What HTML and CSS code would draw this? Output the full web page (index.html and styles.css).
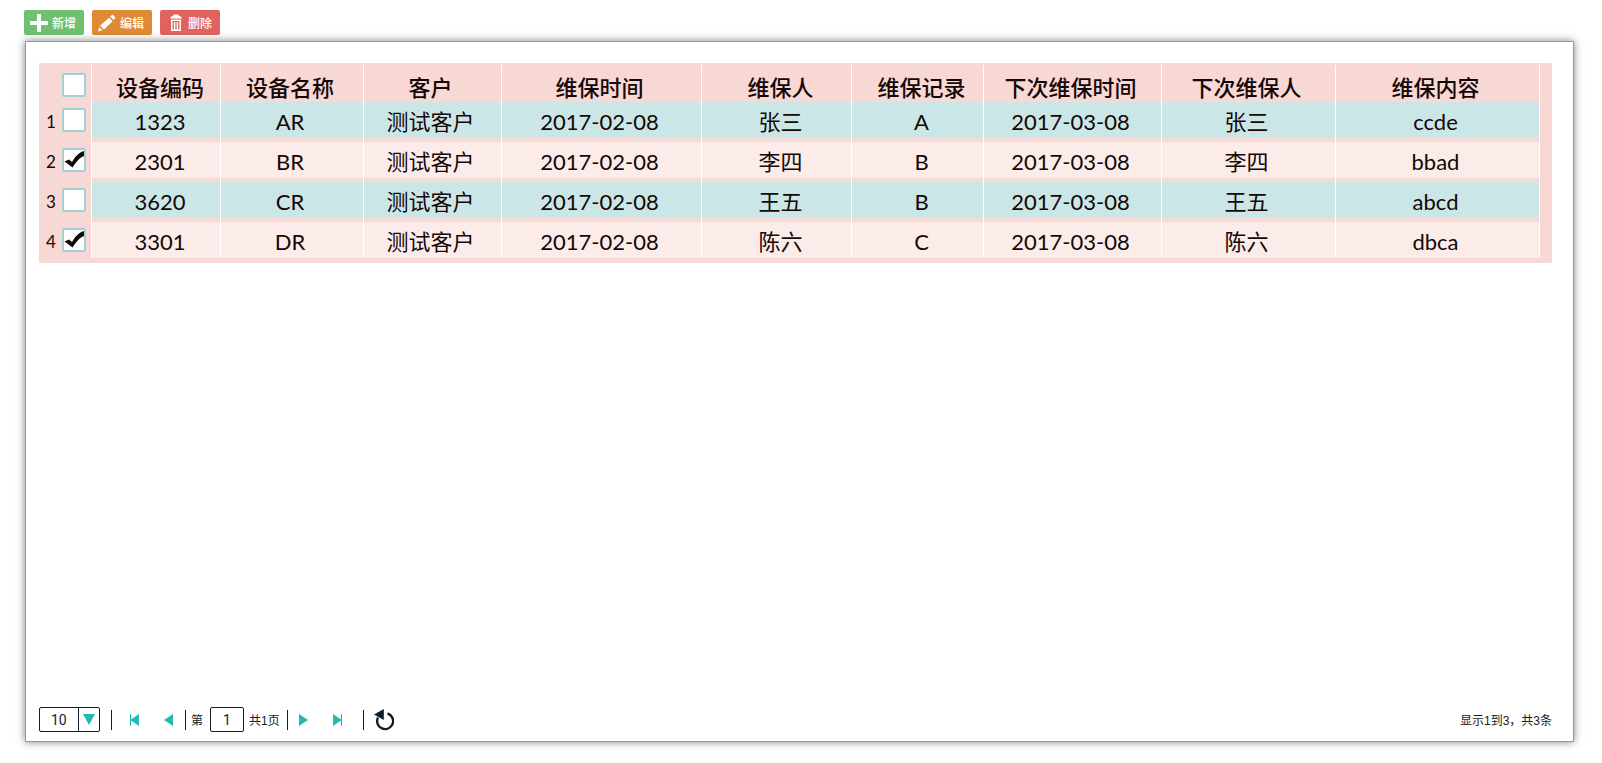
FILE: index.html
```html
<!DOCTYPE html>
<html lang="zh-CN">
<head>
<meta charset="utf-8">
<meta name="viewport" content="width=device-width, initial-scale=1">
<title>设备维保</title>
<link rel="stylesheet" href="styles.css">
</head>
<body>
<div class="page">
  <div class="toolbar">
    <button type="button" class="btn btn-add"><svg width="18" height="18" viewBox="0 0 18 18" aria-hidden="true"><path d="M7 0h4v7h7v4h-7v7H7v-7H0V7h7z" fill="#fff"/></svg>新增</button>
    <button type="button" class="btn btn-edit"><svg width="18" height="18" viewBox="0 0 18 18" aria-hidden="true"><path d="M0 17.500L1.200 13L4.500 16.200zM2.200 11.500L11 3.800L14.500 7.200L6 15.500zM12.200 2.500L14.500 .5L17.500 3.800L15.600 6z" fill="#fff"/></svg>编辑</button>
    <button type="button" class="btn btn-delete"><svg width="12" height="18" viewBox="0 0 12 18" aria-hidden="true"><path d="M0.500 4.500V3L3 1.800L4 .5h4l1 1.300L11.500 3v1.500z" fill="#fff"/><path d="M1.800 6.300v10h8.400v-10zM4.600 8v8M7.400 8v8" fill="none" stroke="#fff" stroke-width="1.500"/></svg>删除</button>
  </div>
  <main class="panel">
    <div class="grid">
      <table>
        <colgroup>
          <col class="c-pick"><col class="c-code"><col class="c-name"><col class="c-client"><col class="c-date"><col class="c-person"><col class="c-record"><col class="c-next-date"><col class="c-next-person"><col class="c-content">
        </colgroup>
        <thead>
          <tr><th class="pick"><div class="pick-row"><span class="num"></span><input type="checkbox" aria-label="全选"></div></th><th class="inset">设备编码</th><th>设备名称</th><th>客户</th><th>维保时间</th><th class="inset">维保人</th><th class="inset">维保记录</th><th>下次维保时间</th><th>下次维保人</th><th>维保内容</th></tr>
        </thead>
        <tbody>
          <tr><td class="pick"><div class="pick-row"><label class="num" for="row1">1</label><input type="checkbox" id="row1"></div></td><td class="inset">1323</td><td>AR</td><td>测试客户</td><td>2017-02-08</td><td class="inset">张三</td><td class="inset">A</td><td>2017-03-08</td><td>张三</td><td>ccde</td></tr>
          <tr><td class="pick"><div class="pick-row"><label class="num" for="row2">2</label><input type="checkbox" id="row2" checked></div></td><td class="inset">2301</td><td>BR</td><td>测试客户</td><td>2017-02-08</td><td class="inset">李四</td><td class="inset">B</td><td>2017-03-08</td><td>李四</td><td>bbad</td></tr>
          <tr><td class="pick"><div class="pick-row"><label class="num" for="row3">3</label><input type="checkbox" id="row3"></div></td><td class="inset">3620</td><td>CR</td><td>测试客户</td><td>2017-02-08</td><td class="inset">王五</td><td class="inset">B</td><td>2017-03-08</td><td>王五</td><td>abcd</td></tr>
          <tr><td class="pick"><div class="pick-row"><label class="num" for="row4">4</label><input type="checkbox" id="row4" checked></div></td><td class="inset">3301</td><td>DR</td><td>测试客户</td><td>2017-02-08</td><td class="inset">陈六</td><td class="inset">C</td><td>2017-03-08</td><td>陈六</td><td>dbca</td></tr>
        </tbody>
      </table>
    </div>
    <footer class="pager">
      <select class="size" aria-label="每页条数"><option>10</option><option>20</option><option>50</option></select>
      <span class="rule"></span>
      <button type="button" class="nav" aria-label="首页"><svg width="9" height="12" viewBox="0 0 9 12"><path d="M0 0h1v5.500L9 0v12L1 6.500V12H0z"/></svg></button>
      <button type="button" class="nav" aria-label="上一页"><svg width="9" height="12" viewBox="0 0 9 12"><path d="M9 0v12L0 6z"/></svg></button>
      <span class="rule rule-page"></span>
      <label for="pageno">第</label>
      <input class="pageno" id="pageno" type="text" value="1">
      <span class="word">共1页</span>
      <span class="rule rule-page"></span>
      <button type="button" class="nav" aria-label="下一页"><svg width="9" height="12" viewBox="0 0 9 12"><path d="M0 0v12l9-6z"/></svg></button>
      <button type="button" class="nav" aria-label="末页"><svg width="9" height="12" viewBox="0 0 9 12"><path d="M9 0H8v5.500L0 0v12l8-5.500V12h1z"/></svg></button>
      <span class="rule rule-reload"></span>
      <button type="button" class="reload" aria-label="刷新"><svg width="20" height="22" viewBox="0 0 20 22"><path d="M13.500 4.500a8 8 0 1 1-9.500 4" fill="none" stroke="#101d29" stroke-width="2.400"/><path d="M0 5.500L9.800 0v11z" fill="#101d29"/></svg></button>
      <span class="summary">显示1到3，共3条</span>
    </footer>
  </main>
</div>
</body>
</html>
```

FILE: styles.css
```css
* {
  box-sizing: border-box;
}

body {
  margin: 0;
  background: #fff;
  color: #101d29;
  font-family: "Liberation Sans", "Noto Sans CJK SC", sans-serif;
  font-size: 12px;
}

button {
  border: 0;
  padding: 0;
  background: none;
  font: inherit;
  color: inherit;
}

.page {
  display: flex;
  flex-direction: column;
  min-height: 100vh;
  padding: 10px 28px 21px 25px;
}

.toolbar {
  display: flex;
  gap: 8px;
  margin-left: -1px;
  margin-bottom: 6px;
}

.btn {
  display: flex;
  align-items: center;
  justify-content: space-between;
  width: 60px;
  height: 25px;
  padding: 0 8px 0 6px;
  border-radius: 2px;
  color: #fff;
  font-weight: 500;
}

.btn-add {
  background: #6fc16f;
}

.btn-edit {
  background: #e08a35;
}

.btn-delete {
  padding-left: 10px;
  background: #e0635f;
}

.panel {
  flex: 1;
  display: flex;
  flex-direction: column;
  justify-content: space-between;
  padding: 21px 21px 9px 13px;
  border: 1px solid #3cc1b8;
  box-shadow: 0 0 8px rgba(0, 0, 0, 0.5);
}

.grid {
  padding: 2px 12px 5px 0;
  border-radius: 2px;
  background: #f8d8d5;
}

table {
  width: 100%;
  table-layout: fixed;
  border-spacing: 0;
  color: #140707;
  font-family: Lato, "Noto Sans CJK SC", sans-serif;
  font-size: 22px;
  line-height: 28px;
}

.c-pick { width: 53px; }
.c-code { width: 129px; }
.c-name { width: 143px; }
.c-client { width: 138px; }
.c-date { width: 200px; }
.c-person { width: 150px; }
.c-record { width: 132px; }
.c-next-date { width: 178px; }
.c-next-person { width: 174px; }
.c-content { width: 204px; }

th,
td {
  padding: 6px 4px 6px 0;
  border-right: 1px solid #fff;
  text-align: center;
  white-space: nowrap;
}

th {
  padding-top: 9px;
  padding-bottom: 0;
  font-weight: 500;
}

td {
  background: linear-gradient(#cbe6e6, #cbe6e6) 0 0 / 100% calc(100% - 4px) no-repeat;
}

tr:nth-child(even) td {
  background-image: linear-gradient(#fbecea, #fbecea);
}

tbody tr:last-child td {
  padding-bottom: 2px;
  background-size: 100% 100%;
}

.inset {
  padding-left: 12px;
}

th.pick {
  padding: 6px 0 4px;
}

tbody tr td.pick {
  padding-top: 5px;
  padding-right: 0;
  background: none;
}

.pick-row {
  display: flex;
  align-items: flex-start;
  gap: 6px;
  height: 28px;
  padding-left: 7px;
}

thead .pick-row {
  height: 24px;
}

.num {
  width: 10px;
  font-size: 17px;
}

input[type="checkbox"] {
  appearance: none;
  width: 24px;
  height: 24px;
  margin: 0;
  border: 2px solid #a3d0d3;
  border-radius: 2px;
  background: #fff;
}

input[type="checkbox"]:checked {
  background: #fff url("data:image/svg+xml,%3Csvg xmlns='http://www.w3.org/2000/svg' viewBox='0 0 20 20'%3E%3Cpath d='M.5 11.500L5 9.500L8 12C11 7 14 3 20 1v5C15 8 12 12 8.500 17.500z' fill='%23140707'/%3E%3C/svg%3E") center / 20px 20px no-repeat;
}

.pager {
  display: flex;
  align-items: center;
}

.size {
  appearance: none;
  width: 61px;
  height: 25px;
  padding: 0 0 0 11px;
  border: 1px solid #101d29;
  border-radius: 2px;
  background: #fff url("data:image/svg+xml,%3Csvg xmlns='http://www.w3.org/2000/svg' viewBox='0 0 21 23'%3E%3Cpath d='M0 0h1v23H0z' fill='%23101d29'/%3E%3Cpath d='M5 6h12l-6 11z' fill='%2323b9b3'/%3E%3C/svg%3E") right center / 21px 23px no-repeat;
  color: #101d29;
  font-family: Roboto, sans-serif;
  font-size: 14px;
}

.rule {
  width: 1px;
  height: 20px;
  margin: 0 10px 0 11px;
  background: #101d29;
}

.nav {
  display: flex;
  padding: 0 8px;
  fill: #23b9b3;
}

.nav + .nav {
  margin-left: 9px;
}

.rule-page {
  margin: 0 5px 0 4px;
}

.word + .rule-page {
  margin: 0 3px 0 7px;
}

.rule-reload {
  margin: 0 10px 0 13px;
}

.pageno {
  width: 34px;
  height: 25px;
  margin: 0 5px 0 7px;
  padding: 0;
  border: 1px solid #101d29;
  border-radius: 2px;
  color: #101d29;
  font-family: Roboto, sans-serif;
  font-size: 14px;
  text-align: center;
}

.reload {
  display: flex;
}

.summary {
  margin-left: auto;
}
```
